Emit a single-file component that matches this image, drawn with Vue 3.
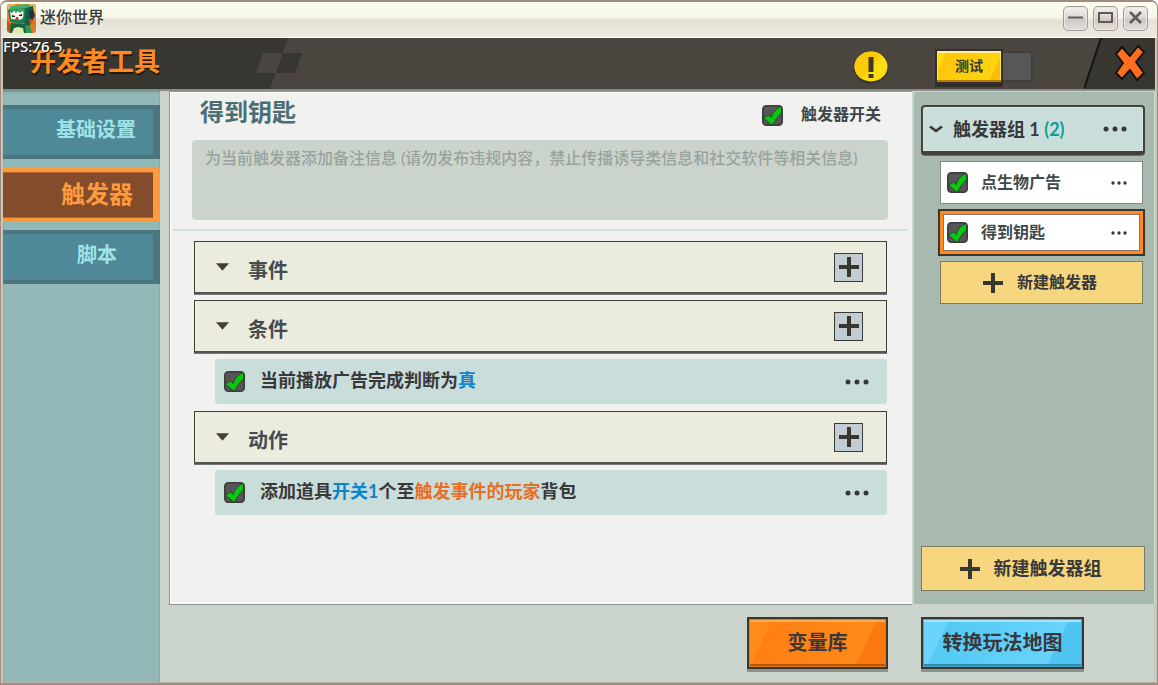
<script setup>
import { ref } from 'vue'

const tabs = ref([
  { name: '基础设置', active: false },
  { name: '触发器', active: true },
  { name: '脚本', active: false },
])

const sections = ref([
  { title: '事件', rows: [] },
  {
    title: '条件',
    rows: [
      { on: true, parts: [{ t: '当前播放广告完成判断为' }, { t: '真', c: 'blue' }] },
    ],
  },
  {
    title: '动作',
    rows: [
      {
        on: true,
        parts: [
          { t: '添加道具' },
          { t: '开关1', c: 'blue' },
          { t: '个至' },
          { t: '触发事件的玩家', c: 'orange' },
          { t: '背包' },
        ],
      },
    ],
  },
])

const triggers = ref([
  { name: '点生物广告', on: true, selected: false },
  { name: '得到钥匙', on: true, selected: true },
])

const enabled = ref(true)
const note = ref('')
</script>

<template>
  <div class="window">
    <svg class="defs" width="0" height="0" aria-hidden="true">
      <symbol id="tick" viewBox="0 0 21 21">
        <path d="M1.500 13.200L6.800 9.800L9 12.500C11 7.500 14 3 19.500 1.500V8C16 11 13 15 10.800 19.800H9.500Z" fill="#08c70f" stroke="#2f352f" stroke-width=".8" />
      </symbol>
      <symbol id="plus" viewBox="0 0 20 20">
        <path d="M8 0h4v8h8v4h-8v8H8v-8H0V8h8z" fill="#39352f" />
      </symbol>
      <symbol id="dots" viewBox="0 0 24 6">
        <circle cx="3" cy="3" r="2.500" />
        <circle cx="12" cy="3" r="2.500" />
        <circle cx="21" cy="3" r="2.500" />
      </symbol>
    </svg>

    <header class="titlebar">
      <svg class="logo" viewBox="0 0 29 29" aria-hidden="true">
        <rect width="29" height="29" rx="3" fill="#e88328" />
        <path d="M0 3L3 0h6L2 8zM22 0h4l3 3v7z" fill="#f9b550" />
        <path d="M0 16l8 9-1 4H3l-3-3z" fill="#b8541c" />
        <path d="M20 20l7-5 2 7-2 7h-6z" fill="#d97a26" />
        <path d="M4 2L20 0l6 3-7 2L1 7z" fill="#3cb371" />
        <path d="M19 4l7-2 1 11-4 8-7-2z" fill="#12613f" />
        <path d="M1 6l18-2-1 13-3 3-12-2z" fill="#1d7f50" />
        <path d="M3 7l14-2-1 9-3 2-9-1z" fill="#f8f5e8" />
        <path d="M3 7l14-2v3l-2-1-2 2-2-2-2 2-2-2-2 2-2-1z" fill="#2e9c62" />
        <path d="M5 11l3 1v1H5zM12 11l3-1v2h-3z" fill="#2b2320" />
        <path d="M9 13h2l1 3H8z" fill="#d23a2c" />
        <path d="M22 6l4-1 2 7-3 4-3-3z" fill="#243447" />
        <path d="M22 16l3-1 1 4-3 1z" fill="#d94a2c" />
        <path d="M4 19l12 1 6-1 1 10H3z" fill="#16603f" />
        <path d="M7 24l4-1 5 1 1 5H5z" fill="#dfe8a6" />
        <path d="M18 21l5 1 2 7h-6z" fill="#29995c" />
      </svg>
      <span class="app-name">迷你世界</span>
      <button class="win-btn" aria-label="最小化">
        <svg viewBox="0 0 23 23"><path d="M4 10.500h15" stroke="#655a52" stroke-width="2" /></svg>
      </button>
      <button class="win-btn" aria-label="最大化">
        <svg viewBox="0 0 23 23"><rect x="5" y="6" width="13" height="9" fill="none" stroke="#655a52" stroke-width="2" /></svg>
      </button>
      <button class="win-btn" aria-label="关闭窗口">
        <svg viewBox="0 0 23 23"><path d="M6 5l11 11M17 5L6 16" stroke="#655a52" stroke-width="2.500" /></svg>
      </button>
    </header>

    <div class="toolbar">
      <svg class="pattern" viewBox="0 0 300 51" aria-hidden="true">
        <path d="M0 0H285L267 51H0z" fill="#383631" />
        <path d="M260 15h20l-7 20h-20z" fill="#4a463f" />
        <path d="M280 15h19l-7 20h-19z" fill="#383631" />
      </svg>
      <span class="fps">FPS:76.5</span>
      <h1>开发者工具</h1>
      <button class="plain warn" aria-label="提示">
        <svg viewBox="0 0 36 34">
          <ellipse cx="18" cy="17.500" rx="17.500" ry="16.500" fill="#3a3733" />
          <ellipse cx="18" cy="16.500" rx="16.500" ry="15" fill="#ffdd14" />
          <path d="M1.500 16.500a16.500 15 0 0 1 27-11.500L9 29A16.500 15 0 0 1 1.500 16.500z" fill="#ffca08" />
          <path d="M15.500 7h5v15h-5zM15.500 24h5v4h-5z" fill="#3e3a26" />
        </svg>
      </button>
      <button class="plain toggle">
        <span class="knob">测试</span>
        <span class="track"></span>
      </button>
      <div class="corner">
        <svg class="slant" viewBox="0 0 71 51" aria-hidden="true">
          <path d="M17 0H71V51H0z" fill="#383631" />
          <path d="M17 0L0 51" stroke="#16150f" stroke-width="2" />
        </svg>
        <button class="plain close" aria-label="关闭">
          <svg viewBox="0 0 32 38">
            <path d="M8 3L16 12L24 2L30 8L22 18L30 29L23 36L16 26L8 35L2 29L9 19L2 10Z" fill="#ff6c22" stroke="#15130f" stroke-width="2" stroke-linejoin="round" />
          </svg>
        </button>
      </div>
    </div>

    <div class="body">
      <nav class="sidebar">
        <button v-for="tab in tabs" :key="tab.name" class="tab" :class="{ active: tab.active }">{{ tab.name }}</button>
      </nav>

      <main>
        <div class="panels">
          <section class="editor">
            <div class="editor-head">
              <h2>得到钥匙</h2>
              <label class="switch">
                <span class="check"><input v-model="enabled" type="checkbox" /><svg v-if="enabled"><use href="#tick" /></svg></span>
                <span class="caption">触发器开关</span>
              </label>
            </div>
            <textarea v-model="note" aria-label="备注信息" placeholder="为当前触发器添加备注信息 (请勿发布违规内容，禁止传播诱导类信息和社交软件等相关信息)"></textarea>
            <hr />
            <div class="sections">
              <template v-for="s in sections" :key="s.title">
                <div class="section-head">
                  <svg class="caret" viewBox="0 0 14 8" aria-hidden="true"><path d="M0 0h14L7 8z" fill="#453f35" /></svg>
                  <h3>{{ s.title }}</h3>
                  <button class="add" :aria-label="'添加' + s.title"><svg><use href="#plus" /></svg></button>
                </div>
                <div v-for="(r, i) in s.rows" :key="i" class="row">
                  <label>
                    <span class="check"><input v-model="r.on" type="checkbox" /><svg v-if="r.on"><use href="#tick" /></svg></span>
                    <span class="text"><span v-for="(p, j) in r.parts" :key="j" :class="p.c">{{ p.t }}</span></span>
                  </label>
                  <button class="plain more" aria-label="更多"><svg><use href="#dots" /></svg></button>
                </div>
              </template>
            </div>
          </section>

          <aside class="groups">
            <div class="group-head">
              <button class="plain group-name">
                <svg viewBox="0 0 14 8" aria-hidden="true"><path d="M1 1.500L7 6L13 1.500" fill="none" stroke="#39352f" stroke-width="2.500" stroke-linejoin="round" /></svg>
                <span>触发器组 1 <span class="count">(2)</span></span>
              </button>
              <button class="plain more" aria-label="更多"><svg><use href="#dots" /></svg></button>
            </div>
            <ul>
              <li v-for="t in triggers" :key="t.name" :class="{ selected: t.selected }">
                <label>
                  <span class="check"><input v-model="t.on" type="checkbox" /><svg v-if="t.on"><use href="#tick" /></svg></span>
                  <span class="caption">{{ t.name }}</span>
                </label>
                <button class="plain more small" aria-label="更多"><svg><use href="#dots" /></svg></button>
              </li>
            </ul>
            <button class="create inner"><svg><use href="#plus" /></svg><span class="caption">新建触发器</span></button>
            <button class="create outer"><svg><use href="#plus" /></svg><span class="caption">新建触发器组</span></button>
          </aside>
        </div>

        <footer>
          <button class="big orange-btn">变量库</button>
          <button class="big blue-btn">转换玩法地图</button>
        </footer>
      </main>
    </div>
  </div>
</template>

<style>
body {
  background: #fff;
}
</style>

<style scoped>
* {
  box-sizing: border-box;
}
.window {
  display: flex;
  flex-direction: column;
  min-height: 100vh;
  border: 1px solid #9e8c80;
  border-width: 2px 1px;
  border-radius: 7px 7px 0 0;
  background: #cdc6b8;
  overflow: hidden;
  font-family: Lato, "Noto Sans CJK SC", sans-serif;
  font-weight: 700;
  color: #39383a;
}
.defs {
  position: absolute;
}
button,
textarea {
  font: inherit;
  color: inherit;
}
button {
  padding: 0;
  cursor: pointer;
}
.plain {
  border: 0;
  background: none;
}
h1,
h2,
h3,
ul {
  margin: 0;
  padding: 0;
}

/* window title bar */
.titlebar {
  display: flex;
  align-items: center;
  gap: 5px;
  height: 36px;
  padding: 0 9px 4px 6px;
  background: linear-gradient(#fbfbee 0, #f8f8ea 42%, #e5e1d6 50%, #ece9df 96%, #fff 97%);
}
.logo {
  width: 29px;
  height: 29px;
}
.app-name {
  flex: 1;
  margin-left: -1px;
  padding-bottom: 2px;
  font-size: 16px;
  font-weight: 500;
  line-height: 24px;
  color: #3c3c3c;
}
.win-btn {
  width: 25px;
  height: 25px;
  border: 1px solid #a79a92;
  border-radius: 5px;
  background: linear-gradient(#f4f2ee, #d9d4d2 50%, #cdc8c7 55%, #e4e0dd);
  box-shadow: inset 0 0 0 1px #ebe7e3;
}
.win-btn svg {
  display: block;
  width: 23px;
  height: 23px;
}

/* game header */
.toolbar {
  position: relative;
  display: flex;
  align-items: center;
  height: 51px;
  margin: 0 2px;
  padding-left: 27px;
  background: #4a463f;
}
.pattern {
  position: absolute;
  left: 0;
  top: 0;
  width: 300px;
  height: 51px;
}
.fps {
  position: absolute;
  left: 0;
  top: 0;
  z-index: 2;
  font: 500 15px/16px "Noto Sans", sans-serif;
  color: #fff;
  text-shadow: 1px 1px 0 #222;
}
h1 {
  position: relative;
  flex: 1;
  padding-bottom: 6px;
  font-size: 26px;
  line-height: 30px;
  color: #ff8a1e;
  text-shadow: 1px 2px 0 #1f1710;
}
.warn {
  margin: 6px 46px 0 0;
}
.warn svg {
  display: block;
  width: 36px;
  height: 34px;
}
.toggle {
  display: flex;
  align-items: center;
  margin: 6px 51px 0 0;
}
.knob {
  width: 68px;
  height: 35px;
  border: 2px solid #35312a;
  box-shadow: inset 0 2px 0 #ffef9a, inset 0 -2px 0 #b77c06, inset 1px 0 0 #ffe45c, inset -1px 0 0 #ffe45c, 0 3px 0 #302d29;
  background: linear-gradient(115deg, #ffd911 12%, #fec60a 13%, #fed40f 84%, #fcbc0a 85%);
  font-size: 14px;
  line-height: 30px;
}
.track {
  width: 30px;
  height: 31px;
  border: 2px solid #403f3f;
  border-left: 0;
  border-radius: 0 3px 3px 0;
  background: #575757;
}
.corner {
  position: relative;
  display: flex;
  align-items: center;
  justify-content: flex-end;
  align-self: stretch;
  width: 71px;
  padding: 0 9px 2px 0;
}
.slant {
  position: absolute;
  right: 0;
  top: 0;
  width: 71px;
  height: 51px;
}
.close {
  position: relative;
}
.close svg {
  display: block;
  width: 32px;
  height: 38px;
}

/* body */
.body {
  flex: 1;
  display: flex;
  margin: 0 2px;
  border-bottom: 1px solid #b5b0a4;
  background: #cbd4cc;
  box-shadow: inset 0 2px 1px #858a85;
}
.sidebar {
  display: flex;
  flex-direction: column;
  gap: 9px;
  width: 157px;
  padding-top: 16px;
  background: #92b8b7;
  box-shadow: inset 0 3px 2px #6f9393;
}
.tab {
  height: 54px;
  border: solid #4c757f;
  border-width: 4px 7px 4px 0;
  background: #4f8896;
  padding: 0 17px 6px 0;
  font-size: 20px;
  line-height: 28px;
  text-align: right;
  color: #9fe3e8;
}
.tab:last-child {
  margin-top: -1px;
  padding-right: 36px;
}
.tab.active {
  border-color: #ff9a3c;
  background: #834d2c;
  box-shadow: inset 0 1px 0 #b0662e, inset 0 -1px 0 #b0662e;
  padding: 0 20px 3px 0;
  font-size: 24px;
  color: #ff9a3c;
}
main {
  flex: 1;
  min-width: 0;
  display: flex;
  flex-direction: column;
  padding: 2px 0 0 9px;
}
.panels {
  flex: 1;
  display: grid;
  grid-template-columns: minmax(0, 1fr) 243px;
}
.editor {
  border: 1px solid #8f9692;
  border-right: 0;
  background: #f1f1f0;
  box-shadow: inset 1px 1px 0 #fff, inset 0 -2px 0 #fafcf9;
}
.editor-head {
  display: flex;
  justify-content: space-between;
  height: 48px;
  padding: 4px 31px 0 30px;
}
h2 {
  font-size: 24px;
  line-height: 32px;
  color: #4b6d74;
}
label {
  display: flex;
  align-items: center;
}
.caption {
  padding-bottom: 2px;
  line-height: 24px;
}
.switch {
  gap: 18px;
  height: 38px;
  font-size: 16px;
  color: #3f4749;
}
.check {
  display: inline-grid;
  flex: none;
  width: 21px;
  height: 21px;
}
.check > * {
  grid-area: 1 / 1;
}
.check input {
  appearance: none;
  width: 21px;
  height: 21px;
  margin: 0;
  border: 1px solid #3f3e3e;
  border-radius: 4px;
  background: #565656;
  box-shadow: inset 0 0 0 1px #444;
}
.check svg {
  position: relative;
  width: 21px;
  height: 21px;
  pointer-events: none;
}
textarea {
  display: block;
  width: calc(100% - 46px);
  height: 80px;
  margin-left: 22px;
  padding: 8px 13px;
  border: 0;
  border-radius: 4px;
  background: #cbd4cc;
  resize: none;
  overflow: hidden;
  font-size: 16px;
  line-height: 20px;
}
textarea::placeholder {
  color: #99a39e;
  font-weight: 500;
  opacity: 1;
}
hr {
  height: 2px;
  margin: 9px 4px 10px 3px;
  border: 0;
  background: #d0e1d6;
}
.sections {
  display: flex;
  flex-direction: column;
  gap: 6px;
  padding: 0 25px 0 24px;
}
.section-head {
  display: flex;
  align-items: center;
  height: 53px;
  padding: 0 23px 0 21px;
  border: 1px solid #413f38;
  border-bottom: 2px solid #55544e;
  background: #ebecde;
  box-shadow: 0 1px 0 #777;
}
.caret {
  width: 13px;
  height: 8px;
}
h3 {
  flex: 1;
  margin-left: 19px;
  padding-top: 5px;
  font-size: 20px;
  line-height: 28px;
  color: #454b4e;
}
.add {
  display: grid;
  place-items: center;
  width: 29px;
  height: 29px;
  border: 1px solid #39383a;
  background: #c1cdd2;
}
.add svg,
.create svg {
  width: 20px;
  height: 20px;
}
.row {
  display: flex;
  align-items: center;
  justify-content: space-between;
  height: 45px;
  margin-left: 21px;
  padding: 0 18px 0 9px;
  border-radius: 3px;
  background: #c9dedb;
  font-size: 18px;
}
.row + .section-head {
  margin-top: 1px;
}
.row label {
  gap: 15px;
}
.row .text {
  padding-bottom: 4px;
  line-height: 26px;
}
.blue {
  color: #0b86cc;
}
.orange {
  color: #e96e24;
}
.more svg {
  display: block;
  width: 24px;
  height: 6px;
  fill: #34373a;
}
.more.small svg {
  width: 16px;
  height: 4px;
}

/* trigger groups */
.groups {
  display: flex;
  flex-direction: column;
  padding: 13px 9px 13px 7px;
  border: 2px solid #c6d5cb;
  border-right-color: #cfdcd2;
  border-width: 1px 1px 1px 2px;
  border-radius: 3px;
  background: #a8baaf;
}
.group-head {
  display: flex;
  align-items: center;
  justify-content: space-between;
  height: 50px;
  padding: 0 16px 0 6px;
  border: 2px solid #45413a;
  border-bottom-width: 4px;
  border-radius: 4px;
  background: #c9dedb;
  box-shadow: inset 0 0 0 1px #d6e8e4, 0 1px 0 #66706a;
}
.group-name {
  display: flex;
  align-items: center;
  gap: 10px;
  font-size: 18px;
  line-height: 26px;
}
.group-name svg {
  width: 14px;
  height: 8px;
}
.count {
  color: #0fa093;
}
ul {
  display: flex;
  flex-direction: column;
  gap: 7px;
  margin: 6px 2px 7px 19px;
  list-style: none;
}
li {
  display: flex;
  align-items: center;
  justify-content: space-between;
  height: 43px;
  padding: 0 15px 0 6px;
  border: 1px solid #7f8a83;
  background: #fff;
  font-size: 16px;
  color: #42494b;
}
li label {
  gap: 13px;
}
li.selected {
  padding: 0 13px 0 4px;
  border: 3px solid #ff8a1e;
  box-shadow: inset 0 0 0 1px #8a7568, 0 0 0 2px #3a352f;
}
.create {
  display: flex;
  align-items: center;
  justify-content: center;
  border: 1px solid #7d7d62;
  background: #f6d67e;
}
.inner {
  gap: 14px;
  height: 43px;
  margin: 0 2px 0 19px;
  padding-right: 3px;
  font-size: 16px;
}
.outer {
  gap: 14px;
  height: 45px;
  margin-top: auto;
  padding-right: 5px;
  font-size: 18px;
}

/* bottom actions */
footer {
  display: flex;
  justify-content: flex-end;
  gap: 33px;
  height: 77px;
  padding: 12px 71px 0 0;
}
.big {
  height: 52px;
  padding: 0 19px 2px;
  border: 2px solid #39382f;
  font-size: 20px;
  line-height: 28px;
}
.orange-btn {
  min-width: 141px;
  background: linear-gradient(115deg, #ff8c1a 14%, #ff7f14 15%, #ff8a18 80%, #fb7a12 81%);
  box-shadow: inset 0 0 0 1px #e07a1c, inset 0 -3px 0 #b7560a, inset 0 3px 0 #ffac50, 0 3px 0 #8c918a;
}
.blue-btn {
  min-width: 163px;
  background: linear-gradient(115deg, #6ad4fd 14%, #55c9f5 15%, #68d3fc 80%, #50c5f1 81%);
  box-shadow: inset 0 0 0 1px #4aa9cf, inset 0 -3px 0 #2f8cb3, inset 0 3px 0 #a5e6ff, 0 3px 0 #8c918a;
}
</style>
